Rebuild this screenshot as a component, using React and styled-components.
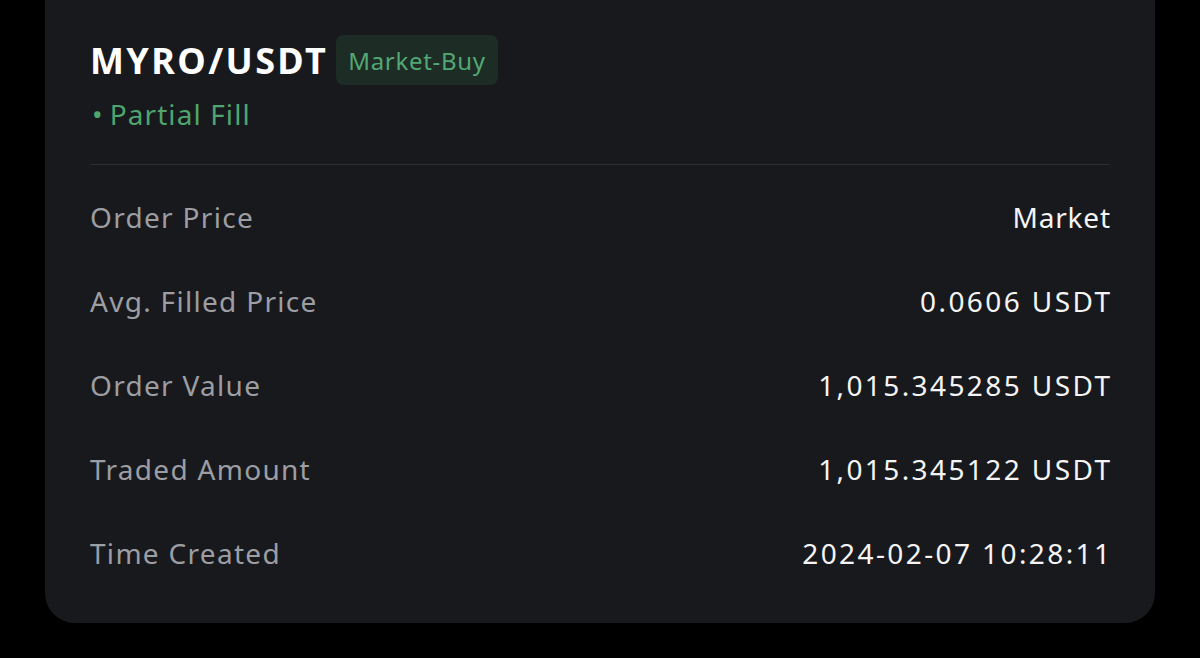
import React from 'react';
import styled, { createGlobalStyle } from 'styled-components';

const GlobalStyle = createGlobalStyle`
  html, body {
    margin: 0;
    padding: 0;
    background: #000;
  }
  body {
    font-family: "Noto Sans", "Liberation Sans", sans-serif;
    -webkit-font-smoothing: antialiased;
  }
`;

const Page = styled.div`
  width: 1200px;
  height: 658px;
  background: #000;
  overflow: hidden;
`;

const Card = styled.div`
  margin: 0 45px;
  width: 1110px;
  box-sizing: border-box;
  padding: 35px 45px 28px;
  background: #18191d;
  border-radius: 0 0 30px 30px;
`;

const TitleRow = styled.div`
  display: flex;
  align-items: center;
  gap: 8px;
  height: 50px;
`;

const Pair = styled.h1`
  margin: 0;
  font-size: 36px;
  font-weight: 700;
  color: #fff;
  letter-spacing: 2.4px;
`;

const Badge = styled.span`
  display: inline-flex;
  align-items: center;
  height: 50px;
  padding: 0 12px;
  border-radius: 8px;
  background: #1d2c24;
  color: #52a874;
  font-size: 24px;
  letter-spacing: 0.7px;
`;

const Status = styled.div`
  margin-top: 11px;
  height: 36px;
  line-height: 36px;
  font-size: 28px;
  color: #4fa56d;
  letter-spacing: 1.1px;

  &::before {
    content: '•';
    margin-right: 6px;
    margin-left: 2px;
  }
`;

const Divider = styled.hr`
  margin: 32px 0 10px;
  border: none;
  height: 1px;
  background: #2d2e33;
`;

const Row = styled.div`
  display: flex;
  justify-content: space-between;
  align-items: center;
  height: 84px;
  font-size: 28px;
`;

const Label = styled.span`
  color: #9c9ea3;
  letter-spacing: 1.3px;
`;

const Value = styled.span`
  color: #f4f4f5;
  letter-spacing: ${(p) => (p.$numeric ? '2.4px' : '0.8px')};
  margin-right: ${(p) => (p.$numeric ? '-2.4px' : '-0.8px')};
`;

const rows = [
  ['Order Price', 'Market'],
  ['Avg. Filled Price', '0.0606 USDT'],
  ['Order Value', '1,015.345285 USDT'],
  ['Traded Amount', '1,015.345122 USDT'],
  ['Time Created', '2024-02-07 10:28:11'],
];

const App = () => {
  return (
    <Page>
      <GlobalStyle />
      <Card>
        <TitleRow>
          <Pair>MYRO/USDT</Pair>
          <Badge>Market-Buy</Badge>
        </TitleRow>
        <Status>Partial Fill</Status>
        <Divider />
        {rows.map(([label, value]) => (
          <Row key={label}>
            <Label>{label}</Label>
            <Value $numeric={/\d/.test(value)}>{value}</Value>
          </Row>
        ))}
      </Card>
    </Page>
  );
};

export default App;
